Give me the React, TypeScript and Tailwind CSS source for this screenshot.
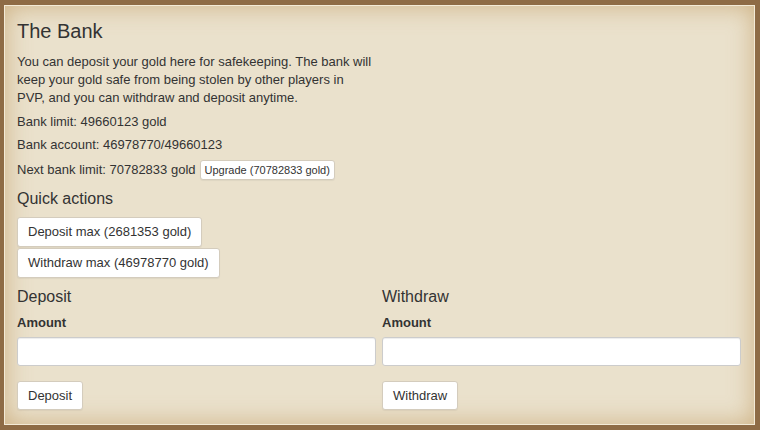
import React from "react";

const btn =
  "bg-white border border-[#d4ccbd] rounded-[3px] text-[#333] shadow-[0_1px_1px_rgba(0,0,0,0.05)]";

export default function App() {
  return (
    <div
      className="w-[760px] h-[430px] bg-[#8e6b45] pt-[5px] pl-[4px] pr-[5px] pb-[5px]"
      style={{ fontFamily: '"Liberation Sans", Arial, sans-serif' }}
    >
      <div className="w-full h-full bg-[#eae1cc] border border-[#f3ead6] shadow-[inset_0_0_24px_rgba(196,160,106,0.75)] px-[12px] pt-[13px] text-[#333] flex flex-col">
        <h1 className="text-[20px] leading-[24px] text-[#333]">The Bank</h1>
        <p className="mt-[10px] text-[13px] leading-[18px] w-[356px]">
          You can deposit your gold here for safekeeping. The bank will keep your gold safe from being
          stolen by other players in PVP, and you can withdraw and deposit anytime.
        </p>
        <div className="mt-[6px] text-[13px] leading-[18px]">Bank limit: 49660123 gold</div>
        <div className="mt-[5px] text-[13px] leading-[18px]">Bank account: 46978770/49660123</div>
        <div className="mt-[6px] flex items-center h-[20px] text-[13px] leading-[18px]">
          <span>Next bank limit: 70782833 gold</span>
          <button className={`${btn} ml-[4px] h-[20px] px-[4px] text-[11px] leading-[14px]`}>
            Upgrade (70782833 gold)
          </button>
        </div>
        <h2 className="mt-[9px] text-[16px] leading-[20px]">Quick actions</h2>
        <div className="mt-[8px] flex flex-col items-start gap-[1px]">
          <button className={`${btn} h-[30px] px-[10px] text-[13px]`}>Deposit max (2681353 gold)</button>
          <button className={`${btn} h-[30px] px-[10px] text-[13px]`}>Withdraw max (46978770 gold)</button>
        </div>
        <div className="mt-[9px] grid grid-cols-2 gap-[6px] w-[724px]">
          {[
            ["Deposit", "Deposit"],
            ["Withdraw", "Withdraw"],
          ].map(([title, label]) => (
            <div key={title} className="flex flex-col items-start">
              <h2 className="text-[16px] leading-[20px]">{title}</h2>
              <label className="mt-[7px] text-[13px] leading-[18px] font-bold">Amount</label>
              <input
                type="text"
                className="mt-[5px] w-full h-[29px] bg-white border border-[#ccc] rounded-[3px] shadow-[inset_0_1px_1px_rgba(0,0,0,0.075)] outline-none px-2 text-[13px]"
              />
              <button className={`${btn} mt-[15px] h-[29px] px-[10px] text-[13px]`}>{label}</button>
            </div>
          ))}
        </div>
      </div>
    </div>
  );
}
